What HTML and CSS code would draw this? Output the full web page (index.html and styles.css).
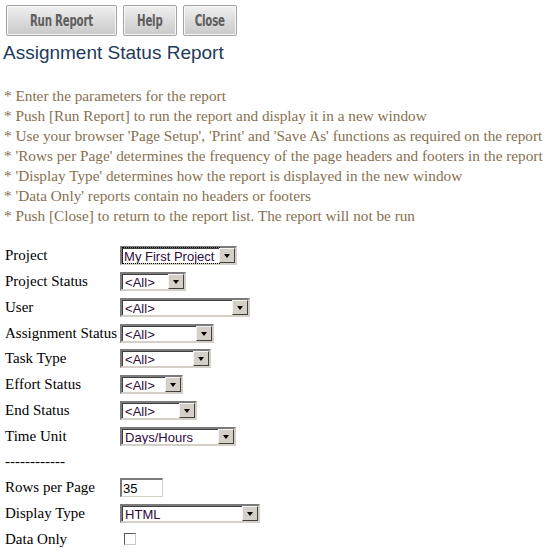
FILE: index.html
```html
<!DOCTYPE html>
<html>
<head>
<meta charset="utf-8">
<link rel="stylesheet" href="styles.css">
</head>
<body>
<div class="toolbar">
  <button class="btn btn-run"><span class="btn-text">Run Report</span></button>
  <button class="btn btn-help"><span class="btn-text">Help</span></button>
  <button class="btn btn-close"><span class="btn-text">Close</span></button>
</div>
<h1 class="title">Assignment Status Report</h1>
<ul class="notes">
  <li>* Enter the parameters for the report</li>
  <li>* Push [Run Report] to run the report and display it in a new window</li>
  <li>* Use your browser 'Page Setup', 'Print' and 'Save As' functions as required on the report</li>
  <li>* 'Rows per Page' determines the frequency of the page headers and footers in the report</li>
  <li>* 'Display Type' determines how the report is displayed in the new window</li>
  <li>* 'Data Only' reports contain no headers or footers</li>
  <li>* Push [Close] to return to the report list. The report will not be run</li>
</ul>
<div class="form">
  <div class="lbl">Project</div>
  <div class="fld"><span class="sel w-project"><select class="focus"><option>My First Project</option></select></span></div>
  <div class="lbl">Project Status</div>
  <div class="fld"><span class="sel w-pstatus"><select><option>&lt;All&gt;</option></select></span></div>
  <div class="lbl">User</div>
  <div class="fld"><span class="sel w-user"><select><option>&lt;All&gt;</option></select></span></div>
  <div class="lbl">Assignment Status</div>
  <div class="fld"><span class="sel w-astatus"><select><option>&lt;All&gt;</option></select></span></div>
  <div class="lbl">Task Type</div>
  <div class="fld"><span class="sel w-ttype"><select><option>&lt;All&gt;</option></select></span></div>
  <div class="lbl">Effort Status</div>
  <div class="fld"><span class="sel w-estatus"><select><option>&lt;All&gt;</option></select></span></div>
  <div class="lbl">End Status</div>
  <div class="fld"><span class="sel w-endstatus"><select><option>&lt;All&gt;</option></select></span></div>
  <div class="lbl">Time Unit</div>
  <div class="fld"><span class="sel w-tunit"><select><option>Days/Hours</option></select></span></div>
  <div class="lbl">------------</div>
  <div class="fld"></div>
  <div class="lbl">Rows per Page</div>
  <div class="fld"><input class="txt" type="text" value="35"></div>
  <div class="lbl">Display Type</div>
  <div class="fld"><span class="sel w-dtype"><select><option>HTML</option></select></span></div>
  <div class="lbl">Data Only</div>
  <div class="fld"><input class="chk" type="checkbox"></div>
</div>
</body>
</html>
```
FILE: styles.css
```css
html, body {
  margin: 0;
  background: #fff;
}
body {
  padding: 5px 0 0 3px;
  font-family: "Liberation Serif", "Times New Roman", serif;
}
.toolbar {
  display: flex;
  gap: 6px;
  padding-left: 3px;
}
.btn {
  height: 31px;
  margin: 0;
  padding: 0;
  border: 1px solid #a3a3a3;
  border-radius: 2px;
  background: linear-gradient(#f0f0f0, #dadada 55%, #c9c9c9);
  box-shadow: inset 0 0 0 1px #f8f8f8;
  overflow: hidden;
}
.btn-text {
  display: inline-block;
  color: #5e5e5e;
  font-family: "DejaVu Sans Condensed", "DejaVu Sans", sans-serif;
  font-weight: bold;
  font-size: 15px;
  letter-spacing: -0.3px;
  transform: scaleX(0.76);
  white-space: nowrap;
}
.btn-run { width: 111px; }
.btn-help { width: 54px; }
.btn-close { width: 54px; }
.title {
  margin: 6px 0 0 0;
  font-family: "Liberation Sans", Arial, sans-serif;
  font-weight: normal;
  font-size: 19px;
  color: #1e3a5c;
  line-height: 22px;
}
.notes {
  list-style: none;
  margin: 22px 0 0 1px;
  padding: 0;
  color: #86704f;
  font-size: 15.25px;
  line-height: 20px;
}
.form {
  margin-top: 17px;
  display: grid;
  grid-template-columns: max-content auto;
  grid-auto-rows: 25.75px;
  column-gap: 3px;
  align-items: center;
  font-size: 15px;
  color: #000;
}
.lbl { white-space: nowrap; padding-left: 2px; }
.fld { display: flex; align-items: center; }
.sel {
  position: relative;
  display: inline-block;
  height: 15px;
  border-top: 2px solid #7b7b7b;
  border-left: 2px solid #7b7b7b;
  border-bottom: 2px solid #d4d0c8;
  border-right: 2px solid #d4d0c8;
  box-shadow: inset 1px 1px 0 #404040;
  background: #fff;
}
.sel select {
  appearance: none;
  -webkit-appearance: none;
  box-sizing: border-box;
  display: block;
  height: 15px;
  width: 100%;
  margin: 0;
  padding: 2px 0 0 3px;
  border: 0;
  background: transparent;
  font-family: "Liberation Sans", Arial, sans-serif;
  font-size: 13px;
  line-height: 13px;
  color: #2e0b3a;
  outline: none;
}
.sel select.focus {
  outline: 1px dotted #000;
  outline-offset: 0;
  width: calc(100% - 17px);
  margin-left: 1px;
  padding-left: 1px;
}
.sel::after {
  content: "";
  position: absolute;
  top: 0;
  right: 0;
  width: 14px;
  height: 13px;
  background: #d4d0c8;
  border: 1px solid;
  border-color: #f4f4f4 #404040 #404040 #f4f4f4;
}
.sel::before {
  content: "";
  position: absolute;
  z-index: 1;
  top: 6px;
  right: 5px;
  border-left: 3.5px solid transparent;
  border-right: 3.5px solid transparent;
  border-top: 4px solid #000;
}
.w-project { width: 113px; }
.w-pstatus { width: 62px; }
.w-user { width: 126px; }
.w-astatus { width: 90px; }
.w-ttype { width: 87px; }
.w-estatus { width: 59px; }
.w-endstatus { width: 73px; }
.w-tunit { width: 112px; }
.w-dtype { width: 136px; }
.txt {
  box-sizing: border-box;
  width: 43px;
  height: 19px;
  margin: 0;
  padding: 0 0 0 1px;
  border-top: 2px solid #7b7b7b;
  border-left: 2px solid #7b7b7b;
  border-bottom: 1px solid #d4d0c8;
  border-right: 1px solid #d4d0c8;
  font-family: "Liberation Sans", Arial, sans-serif;
  font-size: 13px;
  color: #000;
  outline: none;
}
.chk {
  appearance: none;
  -webkit-appearance: none;
  box-sizing: border-box;
  width: 12px;
  height: 12px;
  margin: 0 0 0 4px;
  border-top: 1px solid #5a5a5a;
  border-left: 1px solid #5a5a5a;
  border-bottom: 1px solid #c8c8c8;
  border-right: 1px solid #c8c8c8;
  background: #fff;
}
```
